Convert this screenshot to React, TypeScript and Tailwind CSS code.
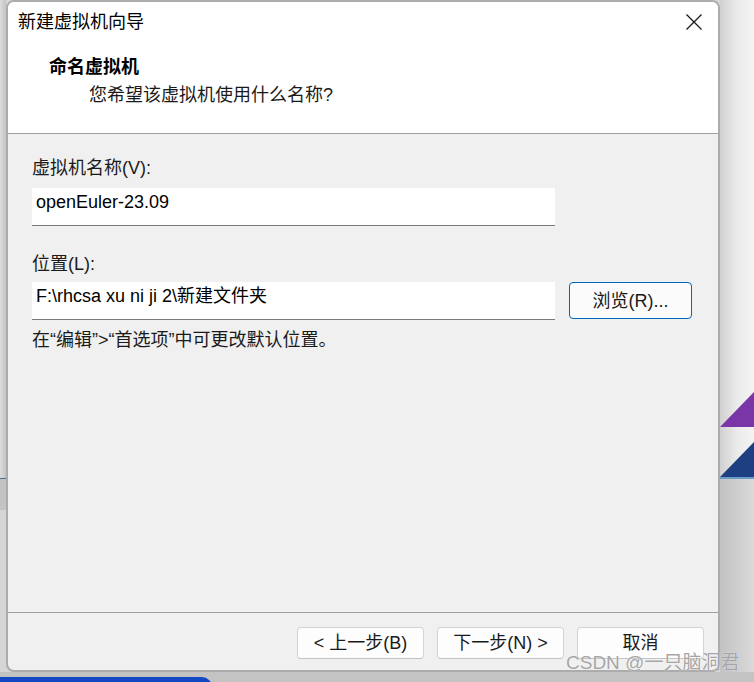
export default function App() {
  const font = "font-['Liberation_Sans','Noto_Sans_CJK_SC',sans-serif]";
  const btn =
    "w-[127px] h-[32px] rounded-[4px] border border-[#d4d4d4] border-b-[#c2c2c2] bg-[#fdfdfd] flex items-center justify-center text-[18px] leading-[24px] text-[#1a1a1a]";
  return (
    <div className={`relative w-[754px] h-[682px] overflow-hidden bg-[#d6d6d6] ${font}`}>
      {/* desktop behind the dialog */}
      <div className="absolute left-0 top-0 w-[6px] h-[478px] bg-gradient-to-r from-[#dcdcdc] to-[#c4c4c4]" />
      <div className="absolute left-0 top-[478px] w-[6px] h-[1px] bg-[#3f7894]" />
      <div className="absolute left-0 top-[479px] w-[6px] h-[31px] bg-[#c3c3c3]" />
      <div className="absolute left-[720px] top-0 w-[34px] h-[477px] bg-gradient-to-r from-[#d0d0d0] via-[#ebebeb] to-[#f4f4f4]" />
      <svg className="absolute left-[720px] top-[380px]" width="34" height="100" viewBox="0 0 34 100">
        <polygon points="0,47 34,12 34,47" fill="#7a35a7" />
        <polygon points="0,97 34,62 34,97" fill="#1e3f82" />
        <rect x="0" y="97" width="34" height="2" fill="#6b9cc9" />
      </svg>
      <div className="absolute left-[720px] top-[479px] w-[34px] h-[193px] bg-gradient-to-r from-[#c2c2c2] to-[#dadada]" />
      <div className="absolute left-0 top-[672px] w-[754px] h-[10px] bg-[#c3c3c3]" />
      <div className="absolute left-0 top-[677px] w-[212px] h-[10px] rounded-tr-[14px] bg-[#1449c6]" />

      {/* dialog window */}
      <div className="absolute left-[6px] top-0 w-[714px] h-[672px] rounded-[8px] border-2 border-[#acacac] bg-[#f0f0f0] flex flex-col overflow-hidden">
        {/* header */}
        <div className="relative h-[132px] shrink-0 bg-white border-b border-[#a0a0a0] flex flex-col">
          <div className="pl-[10px] pt-[8px] text-[18px] leading-[24px] text-black">新建虚拟机向导</div>
          <button className="absolute right-[16px] top-[12px] w-[16px] h-[16px] flex items-center justify-center">
            <svg width="16" height="16" viewBox="0 0 16 16">
              <path d="M0.5 0.5 L15.5 15.5 M15.5 0.5 L0.5 15.5" stroke="#1a1a1a" strokeWidth="1.3" fill="none" />
            </svg>
          </button>
          <div className="pl-[41px] mt-[21px] text-[18px] leading-[24px] font-bold text-black">命名虚拟机</div>
          <div className="pl-[81px] mt-[4px] text-[18px] leading-[24px] text-[#1a1a1a]">您希望该虚拟机使用什么名称?</div>
        </div>

        {/* body */}
        <div className="h-[478px] shrink-0 pl-[24px] pt-[22px] flex flex-col">
          <div className="text-[18px] leading-[24px] text-[#1a1a1a]">虚拟机名称(V):</div>
          <div className="mt-[8px] w-[523px] h-[38px] bg-white border-b border-[#7a7a7a] pl-[4px] pt-[2px] text-[18px] leading-[24px] text-black">
            openEuler-23.09
          </div>
          <div className="mt-[26px] text-[18px] leading-[24px] text-[#1a1a1a]">位置(L):</div>
          <div className="mt-[6px] flex items-start gap-[14px]">
            <div className="w-[523px] h-[38px] bg-white border-b border-[#7a7a7a] pl-[4px] pt-[2px] text-[18px] leading-[24px] text-black">
              F:\rhcsa xu ni ji 2\新建文件夹
            </div>
            <div className="w-[123px] h-[37px] rounded-[4px] border border-[#0067c0] bg-[#fbfbfb] flex items-center justify-center text-[18px] leading-[24px] text-[#1a1a1a]">
              浏览(R)...
            </div>
          </div>
          <div className="mt-[8px] text-[18px] leading-[24px] text-[#1a1a1a]">在“编辑”&gt;“首选项”中可更改默认位置。</div>
        </div>

        {/* footer */}
        <div className="flex-1 border-t border-[#a0a0a0] flex justify-end items-start pt-[14px] pr-[14px] gap-[13px]">
          <div className={btn}>&lt; 上一步(B)</div>
          <div className={btn}>下一步(N) &gt;</div>
          <div className={btn}>取消</div>
        </div>
      </div>

      {/* watermark */}
      <div className="absolute left-[566px] top-[651px] text-[19px] leading-[24px] text-[#9a9a9a]/90 whitespace-nowrap [text-shadow:0_0_1px_#ffffff]">
        CSDN @一只脑洞君
      </div>
    </div>
  );
}
